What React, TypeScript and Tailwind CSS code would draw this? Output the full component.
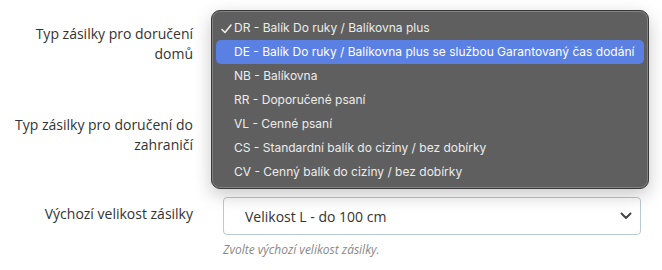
import React from "react";

const items = [
  "DR - Balík Do ruky / Balíkovna plus",
  "DE - Balík Do ruky / Balíkovna plus se službou Garantovaný čas dodání",
  "NB - Balíkovna",
  "RR - Doporučené psaní",
  "VL - Cenné psaní",
  "CS - Standardní balík do ciziny / bez dobírky",
  "CV - Cenný balík do ciziny / bez dobírky",
];

function Chevron() {
  return (
    <svg width="12" height="8" viewBox="0 0 12 8" className="shrink-0">
      <path d="M1.5 1.5 L6 6 L10.5 1.5" fill="none" stroke="#444" strokeWidth="2" strokeLinecap="round" strokeLinejoin="round" />
    </svg>
  );
}

export default function App() {
  return (
    <div className="relative w-[662px] h-[270px] bg-white overflow-hidden" style={{ fontFamily: '"Open Sans", sans-serif' }}>
      <div className="pt-[17px]">
        {/* group 1 */}
        <div className="flex h-[91px]">
          <div className="w-[193px] pt-[7px] text-right text-[14px] leading-[20px] text-[#333]">
            Typ zásilky pro doručení<br />domů
          </div>
          <div className="ml-[30px] w-[418px] h-[38px] border border-[#b9c9d0] rounded-[4px]" />
        </div>
        {/* group 2 */}
        <div className="flex h-[89px]">
          <div className="w-[193px] pt-[7px] text-right text-[14px] leading-[20px] text-[#333]">
            Typ zásilky pro doručení do<br />zahraničí
          </div>
          <div className="ml-[30px] w-[418px] h-[38px] border border-[#b9c9d0] rounded-[4px]" />
        </div>
        {/* group 3 */}
        <div className="flex">
          <div className="w-[193px] pt-[7px] text-right text-[14px] leading-[20px] text-[#333]">
            Výchozí velikost zásilky
          </div>
          <div className="ml-[30px] w-[418px]">
            <div className="h-[38px] border border-[#b9c9d0] rounded-[4px] flex items-center pl-[21px] pr-[8px] text-[14px] text-[#333]">
              <span className="flex-1">Velikost L - do 100 cm</span>
              <Chevron />
            </div>
            <div className="mt-[6px] text-[12px] italic leading-[18px] text-[#888]">Zvolte výchozí velikost zásilky.</div>
          </div>
        </div>
      </div>

      {/* dropdown menu overlay */}
      <div
        className="absolute left-[211px] top-[10px] w-[438px] h-[179px] rounded-[9px] bg-[#5f5f5f] border border-[#3a3a3a] pt-[5px] shadow-[inset_0_0_0_1px_rgba(255,255,255,0.22),0_6px_18px_rgba(0,0,0,0.22)]"
        style={{ fontFamily: 'Inter, "Noto Sans", sans-serif' }}
      >
        {items.map((t, i) => (
          <div
            key={t}
            className={
              i === 1
                ? "relative mx-[4px] h-[24px] rounded-[5px] bg-[#5b80e3] text-white flex items-center pl-[18px] text-[12px] whitespace-nowrap"
                : "relative mx-[4px] h-[24px] text-[#ececec] flex items-center pl-[18px] text-[12px] whitespace-nowrap"
            }
          >
            {i === 0 && (
              <svg width="11" height="10" viewBox="0 0 11 10" className="absolute left-[5px] top-[8px]">
                <path d="M1 5.5 L4 8.5 L10 1" fill="none" stroke="#ececec" strokeWidth="1.6" strokeLinecap="round" strokeLinejoin="round" />
              </svg>
            )}
            {t}
          </div>
        ))}
      </div>
    </div>
  );
}
